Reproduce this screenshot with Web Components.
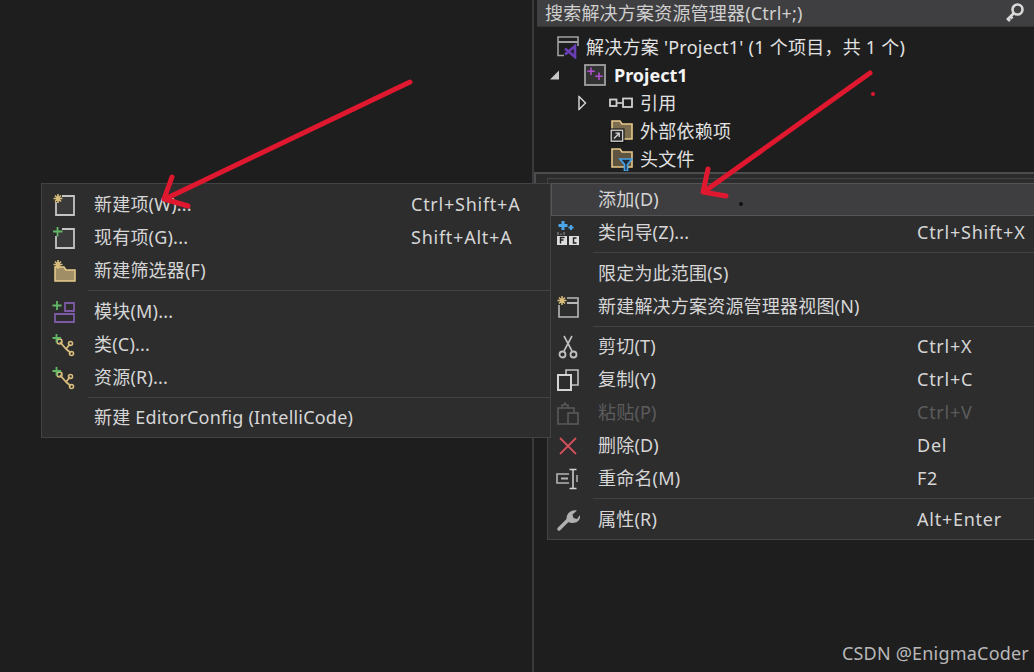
<!DOCTYPE html>
<html lang="zh">
<head>
<meta charset="utf-8">
<title>解决方案资源管理器</title>
<style>
  html, body { margin: 0; height: 100%; }
  body {
    position: relative;
    overflow: hidden;
    background: #1e1e1e;
    color: #dcdcdc;
    font: 18px "Noto Sans", "Noto Sans CJK SC", sans-serif;
  }
  svg { display: block; }
</style>
</head>
<body>
<explorer-panel>
  <tree-row level="0" text="解决方案 'Project1' (1 个项目，共 1 个)">
    <svg slot="icon" width="24" height="24" viewBox="0 0 24 24" fill="none"><path d="M8 20.500H2V2h20v9" stroke="#a0a0a0" stroke-width="1.600"/><path d="M2 7h20" stroke="#a0a0a0" stroke-width="2"/><path d="M9 13.500l10 8.500V11l-10 8.500" stroke="#6a3fb5" stroke-width="2.600"/></svg>
  </tree-row>
  <tree-row level="1" expander="open" bold text="Project1">
    <svg slot="icon" width="22" height="22" viewBox="0 0 22 22" fill="none"><rect x="1" y="1" width="20" height="20" fill="#333" stroke="#a0a0a0" stroke-width="1.800"/><path d="M7 3.500v7.500M3.200 7.200h7.600" stroke="#b050cc" stroke-width="1.600"/><path d="M15 8.500v7.500M11.200 12.200h7.600" stroke="#b050cc" stroke-width="1.600"/></svg>
  </tree-row>
  <tree-row level="2" expander="closed" text="引用">
    <svg slot="icon" width="24" height="24" viewBox="0 0 24 24" fill="none"><rect x="1" y="8.500" width="6.500" height="6.500" stroke="#d0d0d0" stroke-width="1.800"/><path d="M7 12h7" stroke="#d0d0d0" stroke-width="1.600"/><rect x="14" y="7.500" width="9" height="8.500" stroke="#d0d0d0" stroke-width="1.800"/></svg>
  </tree-row>
  <tree-row level="2" text="外部依赖项">
    <svg slot="icon" width="24" height="24" viewBox="0 0 24 24"><path d="M3 2h8l2 3h10v15H3z" fill="#7d6e50" stroke="#e6c98a" stroke-width="1.600"/><rect x="0.500" y="9.500" width="15" height="14.500" fill="#0d0d0d"/><rect x="2.200" y="11.200" width="11.500" height="11" fill="#2a2a2a" stroke="#d8d8d8" stroke-width="1.300"/><path d="M5 19.500l5-5M6.500 14.200H10.200v3.800" fill="none" stroke="#d8d8d8" stroke-width="1.300"/></svg>
  </tree-row>
  <tree-row level="2" text="头文件">
    <svg slot="icon" width="24" height="24" viewBox="0 0 24 24"><path d="M3 2h8l2 3h10v15H3z" fill="#5f5440" stroke="#e6c98a" stroke-width="1.600"/><path d="M11 12h12l-4.500 5.500V24h-3v-6.500z" fill="#1e2a38" stroke="#47a3ea" stroke-width="1.700"/></svg>
  </tree-row>
</explorer-panel>

<context-menu id="rightMenu">
  <menu-item active text="添加(D)"></menu-item>
  <menu-item text="类向导(Z)..." shortcut="Ctrl+Shift+X">
    <svg slot="icon" width="24" height="26" viewBox="0 0 24 26"><path d="M7 1v9M2.500 5.500h9" stroke="#4ea6ea" stroke-width="3"/><path d="M15 5v5M12.500 7.500h5" stroke="#4ea6ea" stroke-width="2"/><path d="M2 15v-3M5 15v-1.500M8 15v-3" stroke="#999" stroke-width="1"/><rect x="1" y="16" width="10" height="9" fill="#ddd"/><rect x="13" y="16" width="10" height="9" fill="#ddd"/><path d="M4.500 23.500v-6h4M4.500 20h3" fill="none" stroke="#222" stroke-width="1.400"/><path d="M20.500 18h-3v5h3" fill="none" stroke="#222" stroke-width="1.400"/></svg>
  </menu-item>
  <menu-sep></menu-sep>
  <menu-item text="限定为此范围(S)"></menu-item>
  <menu-item text="新建解决方案资源管理器视图(N)">
    <svg slot="icon" width="24" height="24" viewBox="0 0 24 24"><path d="M3 10v12h19V3H11" fill="none" stroke="#b8b8b8" stroke-width="1.600"/><path d="M11 8h11" stroke="#b8b8b8" stroke-width="2"/><path d="M6 1v9M1.500 5.500h9M3 2.500l6 6M9 2.500l-6 6" stroke="#d8bd7c" stroke-width="1.500"/></svg>
  </menu-item>
  <menu-sep short></menu-sep>
  <menu-item text="剪切(T)" shortcut="Ctrl+X">
    <svg slot="icon" width="20" height="24" viewBox="0 0 20 24" fill="none"><path d="M6 1l8 15M14 1L6 16" stroke="#c0c0c0" stroke-width="1.600"/><circle cx="4.500" cy="19.500" r="3" stroke="#c0c0c0" stroke-width="1.800"/><circle cx="15.500" cy="19.500" r="3" stroke="#c0c0c0" stroke-width="1.800"/></svg>
  </menu-item>
  <menu-item text="复制(Y)" shortcut="Ctrl+C">
    <svg slot="icon" width="24" height="24" viewBox="0 0 24 24" fill="none"><path d="M10 6V2h12v15h-6" stroke="#c0c0c0" stroke-width="1.600"/><rect x="2" y="7" width="13" height="15" stroke="#d4d4d4" stroke-width="2"/></svg>
  </menu-item>
  <menu-item disabled text="粘贴(P)" shortcut="Ctrl+V">
    <svg slot="icon" width="24" height="24" viewBox="0 0 24 24" fill="none"><path d="M12 7h6v4M6 7H2v16h9" stroke="#5a5a5a" stroke-width="1.600"/><path d="M6 7V4h2l1-2 1 2h2v3z" stroke="#5a5a5a" stroke-width="1.500"/><rect x="12" y="12" width="10" height="11" stroke="#5a5a5a" stroke-width="1.600"/></svg>
  </menu-item>
  <menu-item text="删除(D)" shortcut="Del">
    <svg slot="icon" width="20" height="20" viewBox="0 0 20 20" fill="none"><path d="M2 2l16 16M18 2L2 18" stroke="#d24f5a" stroke-width="1.800"/></svg>
  </menu-item>
  <menu-item text="重命名(M)" shortcut="F2">
    <svg slot="icon" width="24" height="24" viewBox="0 0 24 24" fill="none"><path d="M13 7H1v9h12" stroke="#b4b4b4" stroke-width="1.600"/><path d="M5 11.500h7" stroke="#b4b4b4" stroke-width="2"/><path d="M17 3v18M13.500 2.500h7M13.500 21.500h7" stroke="#d4d4d4" stroke-width="1.500"/><path d="M21 8v7" stroke="#b4b4b4" stroke-width="1.500"/></svg>
  </menu-item>
  <menu-sep></menu-sep>
  <menu-item text="属性(R)" shortcut="Alt+Enter">
    <svg slot="icon" width="24" height="24" viewBox="0 0 24 24" fill="none"><path d="M3 21L12 12" stroke="#b0b0b0" stroke-width="3.500" stroke-linecap="round"/><path d="M11 13.500C9 7 14 1 21 2.500L16.500 6.500l1 3.500 3.500 1 3-4c1 7-6 10-13 6.500z" fill="#b0b0b0"/></svg>
  </menu-item>
</context-menu>

<context-menu id="leftMenu">
  <menu-item text="新建项(W)..." shortcut="Ctrl+Shift+A">
    <svg slot="icon" width="24" height="24" viewBox="0 0 24 24"><path d="M4 9v13h18V3H10" fill="#3a3a3a" stroke="#c4c4c4" stroke-width="1.800"/><path d="M6 1v9M1.500 5.500h9M3 2.500l6 6M9 2.500l-6 6" stroke="#d8bd7c" stroke-width="1.600"/></svg>
  </menu-item>
  <menu-item text="现有项(G)..." shortcut="Shift+Alt+A">
    <svg slot="icon" width="24" height="24" viewBox="0 0 24 24"><path d="M4 10v12h18V3H10" fill="#3a3a3a" stroke="#c4c4c4" stroke-width="1.800"/><path d="M5.500 1v9.500M1 5.500h9.500" stroke="#62b866" stroke-width="1.800"/></svg>
  </menu-item>
  <menu-item text="新建筛选器(F)">
    <svg slot="icon" width="24" height="24" viewBox="0 0 24 24"><path d="M3 8h9l2 3h9v11H3z" fill="#a08e66" stroke="#e8cc8c" stroke-width="1.500"/><path d="M6 1v9M1.500 5.500h9M3 2.500l6 6M9 2.500l-6 6" stroke="#d8bd7c" stroke-width="1.600"/></svg>
  </menu-item>
  <menu-sep></menu-sep>
  <menu-item text="模块(M)...">
    <svg slot="icon" width="24" height="24" viewBox="0 0 24 24" fill="none"><path d="M13 3h9v8h-9zM3 14h19v8H3z" stroke="#7c5aa6" stroke-width="1.800"/><path d="M5 1v9M0.500 5.500h9" stroke="#62b866" stroke-width="1.800"/></svg>
  </menu-item>
  <menu-item text="类(C)...">
    <svg slot="icon" width="24" height="24" viewBox="0 0 24 24" fill="none"><path d="M8 9l6 7M14 16l4-5M14 16l5 4" stroke="#d8bd7c" stroke-width="1.800"/><circle cx="7.500" cy="8.500" r="2.500" stroke="#d8bd7c" stroke-width="1.600"/><circle cx="18.500" cy="10.500" r="2" stroke="#d8bd7c" stroke-width="1.600"/><circle cx="19.500" cy="20.500" r="2" stroke="#d8bd7c" stroke-width="1.600"/><path d="M4.500 1v8.500M0.500 5h8.500" stroke="#62b866" stroke-width="1.800"/></svg>
  </menu-item>
  <menu-item text="资源(R)...">
    <svg slot="icon" width="24" height="24" viewBox="0 0 24 24" fill="none"><path d="M8 9l6 7M14 16l4-5M14 16l5 4" stroke="#d8bd7c" stroke-width="1.800"/><circle cx="7.500" cy="8.500" r="2.500" stroke="#d8bd7c" stroke-width="1.600"/><circle cx="18.500" cy="10.500" r="2" stroke="#d8bd7c" stroke-width="1.600"/><circle cx="19.500" cy="20.500" r="2" stroke="#d8bd7c" stroke-width="1.600"/><path d="M4.500 1v8.500M0.500 5h8.500" stroke="#62b866" stroke-width="1.800"/></svg>
  </menu-item>
  <menu-sep short></menu-sep>
  <menu-item text="新建 EditorConfig (IntelliCode)"></menu-item>
</context-menu>

<red-arrows></red-arrows>
<water-mark>CSDN @EnigmaCoder</water-mark>

<script>
class ExplorerPanel extends HTMLElement {
  constructor() {
    super();
    const root = this.attachShadow({ mode: 'open' });
    root.innerHTML = `
      <style>
        :host {
          position: absolute;
          top: 0;
          right: 0;
          bottom: 0;
          left: 532px;
          display: flex;
          flex-direction: column;
          border-left: 2px solid #3a3a3c;
          box-sizing: border-box;
        }
        .search {
          display: flex;
          align-items: center;
          justify-content: space-between;
          height: 27px;
          box-sizing: border-box;
          margin-left: 3px;
          padding: 0 8px 3px 8px;
          background: #3f3f41;
          border-bottom: 1px solid #333;
          color: #cfcfcf;
          letter-spacing: .2px;
          flex-shrink: 0;
        }
        .rows { padding-top: 6px; flex-shrink: 0; }
        .pane {
          height: 9px;
          margin-top: -1px;
          background: #2b2b2b;
          border-top: 2px solid #4c4c4e;
          border-left: 2px solid #4c4c4e;
        }
      </style>
      <div class="search">
        <span>搜索解决方案资源管理器(Ctrl+;)</span>
        <svg width="22" height="22" viewBox="0 0 22 22" fill="none" style="display:block;margin-top:2px"><circle cx="13.500" cy="7.500" r="5" stroke="#d8d8d8" stroke-width="2.600"/><path d="M10 11l-7 7M4 17l2 2M6.500 14.500l2 2" stroke="#d8d8d8" stroke-width="2.600"/></svg>
      </div>
      <div class="rows"><slot></slot></div>
      <div class="pane"></div>
    `;
  }
}

class TreeRow extends HTMLElement {
  constructor() {
    super();
    const root = this.attachShadow({ mode: 'open' });
    const level = Number(this.getAttribute('level'));
    const iconLeft = [22, 50, 75][level];
    const textLeft = [52, 80, 106][level];
    const expander = this.getAttribute('expander');
    let arrow = '';
    if (expander === 'open') {
      arrow = '<svg class="arrow" style="left:15px" width="11" height="11" viewBox="0 0 11 11"><path d="M10 1v9H1z" fill="#c8c8c8"/></svg>';
    } else if (expander === 'closed') {
      arrow = '<svg class="arrow" style="left:44px" width="9" height="15" viewBox="0 0 9 15" fill="none"><path d="M1 1l6.500 6.500L1 14z" stroke="#d0d0d0" stroke-width="1.500"/></svg>';
    }
    root.innerHTML = `
      <style>
        :host { display: block; position: relative; height: 28px; }
        .row {
          display: flex;
          align-items: center;
          height: 100%;
          padding-left: ${iconLeft}px;
          color: #e2e2e2;
          white-space: nowrap;
        }
        .icon { display: flex; align-items: center; width: ${textLeft - iconLeft}px; }
        .arrow { position: absolute; top: 50%; transform: translateY(-50%); }
        .text { padding-bottom: 3px; letter-spacing: .25px; }
        .bold { font-weight: 700; color: #f4f4f4; letter-spacing: 0; padding-bottom: 1px; }
      </style>
      ${arrow}
      <div class="row">
        <span class="icon"><slot name="icon"></slot></span>
        <span class="text ${this.hasAttribute('bold') ? 'bold' : ''}">${this.getAttribute('text')}</span>
      </div>
    `;
  }
}

class ContextMenu extends HTMLElement {
  constructor() {
    super();
    const root = this.attachShadow({ mode: 'open' });
    root.innerHTML = `
      <style>
        :host {
          position: absolute;
          display: block;
          box-sizing: border-box;
          background: #2d2d2e;
          border: 1px solid #434345;
        }
        :host(#leftMenu) {
          left: 41px; top: 183px; width: 510px; height: 255px; padding: 4px 0 0 0;
          --icon-offset: 0px; --key-width: 139px; --sep-start: 46px;
        }
        :host(#rightMenu) {
          left: 547px; top: 178px; width: 490px; height: 362px; padding: 4px 0 0 3px;
          --icon-offset: -5px; --key-width: 119px; --sep-start: 42px;
        }
      </style>
      <slot></slot>
    `;
  }
}

class MenuItem extends HTMLElement {
  constructor() {
    super();
    const root = this.attachShadow({ mode: 'open' });
    const shortcut = this.getAttribute('shortcut') || '';
    root.innerHTML = `
      <style>
        :host {
          display: block;
          height: 33px;
          box-sizing: border-box;
          color: #d6d6d6;
          letter-spacing: .2px;
        }
        :host([disabled]) { color: #5c5c5c; }
        :host([active]) {
          background: #3e3e40;
          box-shadow: inset 0 0 0 1px #555557;
        }
        .row {
          display: flex;
          align-items: center;
          height: 100%;
          white-space: nowrap;
        }
        .icon {
          display: flex;
          align-items: center;
          justify-content: center;
          width: 44px;
          flex-shrink: 0;
          margin-left: var(--icon-offset);
        }
        .text { margin-left: 8px; flex: 1; padding-bottom: 3px; }
        .key { width: var(--key-width); flex-shrink: 0; letter-spacing: .75px; padding-bottom: 1px; }
      </style>
      <div class="row">
        <span class="icon"><slot name="icon"></slot></span>
        <span class="text">${this.getAttribute('text')}</span>
        <span class="key">${shortcut}</span>
      </div>
    `;
  }
}

class MenuSep extends HTMLElement {
  constructor() {
    super();
    const root = this.attachShadow({ mode: 'open' });
    root.innerHTML = `
      <style>
        :host {
          display: block;
          height: 8px;
          padding: 3px 0 0 var(--sep-start);
          box-sizing: border-box;
        }
        :host([short]) { height: 7px; }
        div { height: 1px; background: #424244; }
      </style>
      <div></div>
    `;
  }
}

class RedArrows extends HTMLElement {
  constructor() {
    super();
    const root = this.attachShadow({ mode: 'open' });
    root.innerHTML = `
      <style>
        :host { position: absolute; top: 0; left: 0; width: 1034px; height: 672px; pointer-events: none; }
        svg { display: block; }
      </style>
      <svg width="1034" height="672" fill="none" stroke="#e0182f" stroke-width="5" stroke-linecap="round" stroke-linejoin="round">
        <path d="M410 82L165 199"/>
        <path d="M172 177L164 199L188 206"/>
        <path d="M870 73L705 191"/>
        <path d="M708 169L703 192L726 196"/>
        <circle cx="873" cy="94" r="2" fill="#e0182f" stroke="none"/>
        <circle cx="741" cy="204" r="2" fill="#111" stroke="none"/>
      </svg>
    `;
  }
}

class WaterMark extends HTMLElement {
  constructor() {
    super();
    const root = this.attachShadow({ mode: 'open' });
    root.innerHTML = `
      <style>
        :host { position: absolute; right: 5px; bottom: 7px; color: #b8b8b8; font-size: 18px; letter-spacing: .2px; }
      </style>
      <slot></slot>
    `;
  }
}

customElements.define('explorer-panel', ExplorerPanel);
customElements.define('tree-row', TreeRow);
customElements.define('context-menu', ContextMenu);
customElements.define('menu-item', MenuItem);
customElements.define('menu-sep', MenuSep);
customElements.define('red-arrows', RedArrows);
customElements.define('water-mark', WaterMark);
</script>
</body>
</html>
